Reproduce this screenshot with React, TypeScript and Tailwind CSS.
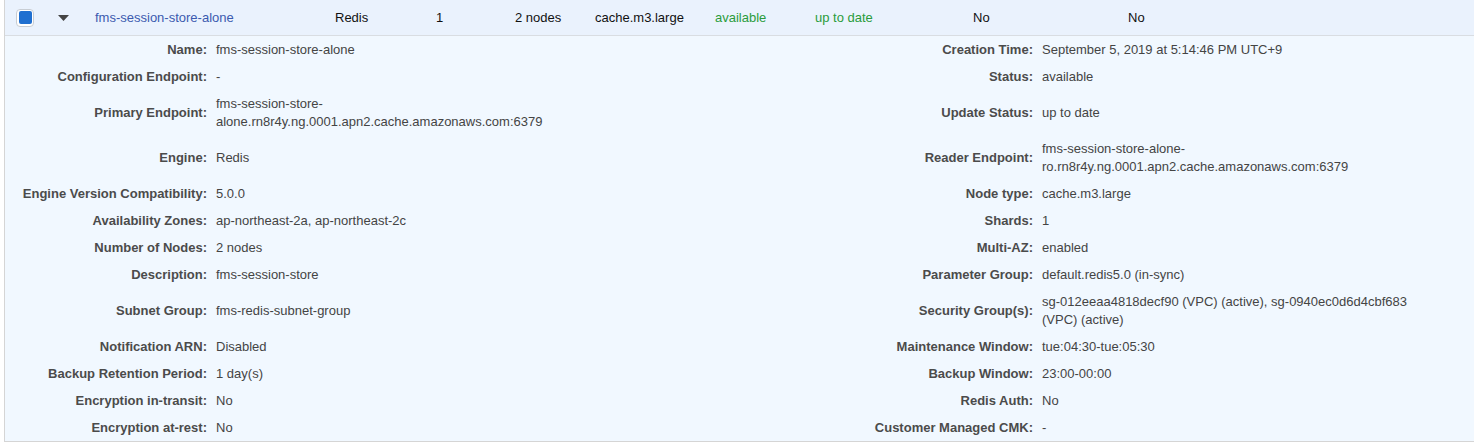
import React from "react";

type Pair = { label: string; value: React.ReactNode };

const rows: [Pair, Pair][] = [
  [
    { label: "Name", value: "fms-session-store-alone" },
    { label: "Creation Time", value: "September 5, 2019 at 5:14:46 PM UTC+9" },
  ],
  [
    { label: "Configuration Endpoint", value: "-" },
    { label: "Status", value: "available" },
  ],
  [
    {
      label: "Primary Endpoint",
      value: (
        <>
          fms-session-store-
          <br />
          alone.rn8r4y.ng.0001.apn2.cache.amazonaws.com:6379
        </>
      ),
    },
    { label: "Update Status", value: "up to date" },
  ],
  [
    { label: "Engine", value: "Redis" },
    {
      label: "Reader Endpoint",
      value: (
        <>
          fms-session-store-alone-
          <br />
          ro.rn8r4y.ng.0001.apn2.cache.amazonaws.com:6379
        </>
      ),
    },
  ],
  [
    { label: "Engine Version Compatibility", value: "5.0.0" },
    { label: "Node type", value: "cache.m3.large" },
  ],
  [
    { label: "Availability Zones", value: "ap-northeast-2a, ap-northeast-2c" },
    { label: "Shards", value: "1" },
  ],
  [
    { label: "Number of Nodes", value: "2 nodes" },
    { label: "Multi-AZ", value: "enabled" },
  ],
  [
    { label: "Description", value: "fms-session-store" },
    { label: "Parameter Group", value: "default.redis5.0 (in-sync)" },
  ],
  [
    { label: "Subnet Group", value: "fms-redis-subnet-group" },
    {
      label: "Security Group(s)",
      value: (
        <>
          sg-012eeaa4818decf90 (VPC) (active), sg-0940ec0d6d4cbf683
          <br />
          (VPC) (active)
        </>
      ),
    },
  ],
  [
    { label: "Notification ARN", value: "Disabled" },
    { label: "Maintenance Window", value: "tue:04:30-tue:05:30" },
  ],
  [
    { label: "Backup Retention Period", value: "1 day(s)" },
    { label: "Backup Window", value: "23:00-00:00" },
  ],
  [
    { label: "Encryption in-transit", value: "No" },
    { label: "Redis Auth", value: "No" },
  ],
  [
    { label: "Encryption at-rest", value: "No" },
    { label: "Customer Managed CMK", value: "-" },
  ],
];

function Label({ text }: { text: string }) {
  return (
    <div className="flex items-center justify-end pr-[9px] py-[4.5px] font-bold text-[#4b4b4b] whitespace-nowrap">
      {text}:
    </div>
  );
}

function Value({ children }: { children: React.ReactNode }) {
  return (
    <div className="flex items-center py-[4.5px] text-[#444] whitespace-nowrap">
      <div>{children}</div>
    </div>
  );
}

export default function App() {
  return (
    <div
      className="w-[1474px] h-[444px] bg-white pl-[4px] text-[13px] leading-[18px]"
      style={{ fontFamily: '"Liberation Sans", Arial, sans-serif' }}
    >
      <div className="border-l border-[#d5d5d5]">
        <div className="flex h-[36px] items-center bg-[#eaf2fd] border-b border-[#d9dde2] text-[#111]">
          <div className="flex w-[90px] items-center">
            <div className="ml-[11px] flex h-[18px] w-[18px] items-center justify-center rounded-[4px] border border-[#c8cdd3] bg-white">
              <div className="h-[13px] w-[13px] rounded-[2px] bg-[#1f6fd0]" />
            </div>
            <svg width="11" height="6" viewBox="0 0 11 6" className="ml-[24px] mt-[1px]">
              <path d="M0 0 L11 0 L5.5 6 Z" fill="#444" />
            </svg>
          </div>
          <div className="w-[240px] text-[#3b5aaf]">fms-session-store-alone</div>
          <div className="w-[101px]">Redis</div>
          <div className="w-[79px]">1</div>
          <div className="w-[80px]">2 nodes</div>
          <div className="w-[120px]">cache.m3.large</div>
          <div className="w-[100px] text-[#2a9c3c]">available</div>
          <div className="w-[158px] text-[#2a9c3c]">up to date</div>
          <div className="w-[155px]">No</div>
          <div>No</div>
        </div>
        <div className="grid grid-cols-[211px_544px_282px_1fr] bg-[#f1f8ff] border-b border-[#d5d5d5]">
          {rows.map(([l, r]) => (
            <React.Fragment key={l.label}>
              <Label text={l.label} />
              <Value>{l.value}</Value>
              <Label text={r.label} />
              <Value>{r.value}</Value>
            </React.Fragment>
          ))}
        </div>
      </div>
    </div>
  );
}
